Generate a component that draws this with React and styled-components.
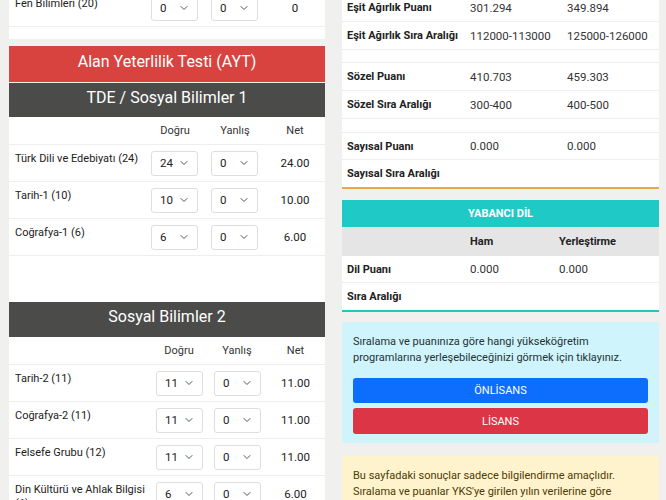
import React from "react";
import styled, { createGlobalStyle } from "styled-components";
import { ChevronDown } from "lucide-react";

const tyt = [{ name: "Fen Bilimleri (20)", d: "0", y: "0", net: "0" }];

const sosyal1 = [
  { name: "Türk Dili ve Edebiyatı (24)", d: "24", y: "0", net: "24.00" },
  { name: "Tarih-1 (10)", d: "10", y: "0", net: "10.00" },
  { name: "Coğrafya-1 (6)", d: "6", y: "0", net: "6.00" },
];

const sosyal2 = [
  { name: "Tarih-2 (11)", d: "11", y: "0", net: "11.00" },
  { name: "Coğrafya-2 (11)", d: "11", y: "0", net: "11.00" },
  { name: "Felsefe Grubu (12)", d: "11", y: "0", net: "11.00" },
  { name: "Din Kültürü ve Ahlak Bilgisi (6)", d: "6", y: "0", net: "6.00" },
];

const scores = [
  { label: "Eşit Ağırlık Puanı", a: "301.294", b: "349.894" },
  { label: "Eşit Ağırlık Sıra Aralığı", a: "112000-113000", b: "125000-126000" },
  { gap: 13 },
  { label: "Sözel Puanı", a: "410.703", b: "459.303" },
  { label: "Sözel Sıra Aralığı", a: "300-400", b: "400-500" },
  { gap: 14 },
  { label: "Sayısal Puanı", a: "0.000", b: "0.000", h: 27 },
  { label: "Sayısal Sıra Aralığı", a: "", b: "", h: 27, last: true },
];

const Select = ({ value }) => (
  <SelectBox>
    <span>{value}</span>
    <ChevronDown size={12} strokeWidth={2} color="#555" />
  </SelectBox>
);

const SubjectTable = ({ rows, cols, head = true }) => (
  <>
    {head && (
      <HeadRow $cols={cols}>
        <span />
        <HeadCell>Doğru</HeadCell>
        <HeadCell>Yanlış</HeadCell>
        <HeadCell>Net</HeadCell>
      </HeadRow>
    )}
    {rows.map((r) => (
      <SubjectRow key={r.name} $cols={cols}>
        <Label>{r.name}</Label>
        <Cell>
          <Select value={r.d} />
        </Cell>
        <Cell>
          <Select value={r.y} />
        </Cell>
        <Net>{r.net}</Net>
      </SubjectRow>
    ))}
  </>
);

const App = () => {
  return (
    <>
      <GlobalStyle />
      <Page>
        <LeftCol>
          <Card $pb={12}>
            <SubjectTable rows={tyt} cols="136px 60px 60px 60px" head={false} />
          </Card>
          <Banner>Alan Yeterlilik Testi (AYT)</Banner>
          <Card>
            <DarkHeader $h={34}>TDE / Sosyal Bilimler 1</DarkHeader>
            <SubjectTable rows={sosyal1} cols="136px 60px 60px 60px" />
            <Spacer />
            <DarkHeader $h={35}>Sosyal Bilimler 2</DarkHeader>
            <SubjectTable rows={sosyal2} cols="141px 58px 58px 59px" />
          </Card>
        </LeftCol>

        <RightCol>
          <ScoreCard $line="#e9a94b">
            {scores.map((s, i) =>
              s.gap ? (
                <GapRow key={i} $h={s.gap} />
              ) : (
                <ScoreRow key={i} $h={s.h} $cols="123px 97px 1fr" $last={s.last}>
                  <ScoreLabel>{s.label}</ScoreLabel>
                  <ScoreValue>{s.a}</ScoreValue>
                  <ScoreValue>{s.b}</ScoreValue>
                </ScoreRow>
              )
            )}
          </ScoreCard>

          <ScoreCard $line="#1fc7c3" $mt={11}>
            <TealHeader>YABANCI DİL</TealHeader>
            <ScoreRow $h={29} $cols="123px 89px 1fr" $grey>
              <span />
              <ScoreLabel>Ham</ScoreLabel>
              <ScoreLabel>Yerleştirme</ScoreLabel>
            </ScoreRow>
            <ScoreRow $h={27} $cols="123px 89px 1fr">
              <ScoreLabel>Dil Puanı</ScoreLabel>
              <ScoreValue>0.000</ScoreValue>
              <ScoreValue>0.000</ScoreValue>
            </ScoreRow>
            <ScoreRow $h={27} $cols="123px 89px 1fr" $last>
              <ScoreLabel>Sıra Aralığı</ScoreLabel>
              <span />
              <span />
            </ScoreRow>
          </ScoreCard>

          <InfoBox>
            <p>
              Sıralama ve puanınıza göre hangi yükseköğretim programlarına
              yerleşebileceğinizi görmek için tıklayınız.
            </p>
            <Button $bg="#0d6efd" $h={25}>ÖNLİSANS</Button>
            <Button $bg="#dc3545" $h={26}>LİSANS</Button>
          </InfoBox>

          <WarnBox>
            Bu sayfadaki sonuçlar sadece bilgilendirme amaçlıdır. Sıralama ve
            puanlar YKS'ye girilen yılın verilerine göre hesaplanmaktadır.
          </WarnBox>
        </RightCol>
      </Page>
    </>
  );
};

export default App;

const GlobalStyle = createGlobalStyle`
  body {
    margin: 0;
    background: #f0f0ef;
    font-family: Roboto, "Noto Sans", sans-serif;
    color: #222;
  }
`;

const Page = styled.div`
  display: grid;
  grid-template-columns: 316px 317px;
  column-gap: 17px;
  align-items: start;
  padding-left: 9px;
  height: 500px;
  overflow: hidden;
`;

const LeftCol = styled.div`
  display: flex;
  flex-direction: column;
  margin-top: -10px;
`;

const RightCol = styled.div`
  display: flex;
  flex-direction: column;
  margin-top: -6px;
`;

const Card = styled.div`
  background: #fff;
  padding-bottom: ${(p) => p.$pb || 0}px;
`;

const Banner = styled.div`
  margin: 7px 0 1px;
  height: 36px;
  box-sizing: border-box;
  padding-bottom: 6px;
  background: #d84340;
  color: #fff;
  font-size: 16px;
  display: flex;
  align-items: center;
  justify-content: center;
`;

const DarkHeader = styled.div`
  height: ${(p) => p.$h}px;
  box-sizing: border-box;
  padding-bottom: 6px;
  background: #4b4c4a;
  color: #fff;
  font-size: 16px;
  display: flex;
  align-items: center;
  justify-content: center;
`;

const Spacer = styled.div`
  height: 46px;
`;

const HeadRow = styled.div`
  display: grid;
  grid-template-columns: ${(p) => p.$cols};
  height: 28px;
  align-items: center;
  border-bottom: 1px solid #eeeeee;
  box-sizing: border-box;
`;

const HeadCell = styled.span`
  text-align: center;
  font-size: 11px;
  color: #333;
`;

const SubjectRow = styled.div`
  display: grid;
  grid-template-columns: ${(p) => p.$cols};
  height: 37px;
  align-items: center;
  border-bottom: 1px solid #eeeeee;
  box-sizing: border-box;
`;

const Label = styled.span`
  align-self: start;
  padding: 7px 0 0 6px;
  font-size: 11px;
  line-height: 14px;
  color: #222;
`;

const Cell = styled.div`
  padding-left: 6px;
`;

const Net = styled.span`
  text-align: center;
  font-size: 11.5px;
`;

const SelectBox = styled.div`
  width: 47px;
  height: 25px;
  box-sizing: border-box;
  border: 1px solid #dedede;
  border-radius: 3px;
  background: #fff;
  display: flex;
  align-items: center;
  justify-content: space-between;
  padding: 0 7px 0 8px;
  font-size: 11.5px;
`;

const ScoreCard = styled.div`
  background: #fff;
  margin-top: ${(p) => p.$mt || 0}px;
  border-bottom: 2px solid ${(p) => p.$line};
`;

const ScoreRow = styled.div`
  display: grid;
  grid-template-columns: ${(p) => p.$cols};
  height: ${(p) => p.$h || 28}px;
  box-sizing: border-box;
  align-items: center;
  padding-left: 5px;
  background: ${(p) => (p.$grey ? "#e5e5e6" : "#fff")};
  border-bottom: ${(p) => (p.$last || p.$grey ? "none" : "1px solid #eeeeee")};
`;

const GapRow = styled.div`
  height: ${(p) => p.$h}px;
  box-sizing: border-box;
  border-bottom: 1px solid #eeeeee;
`;

const ScoreLabel = styled.span`
  font-size: 11px;
  font-weight: 700;
  color: #222;
  white-space: nowrap;
`;

const ScoreValue = styled.span`
  font-size: 11.5px;
  color: #333;
  white-space: nowrap;
`;

const TealHeader = styled.div`
  height: 27px;
  background: #1fcac6;
  color: #fff;
  font-size: 11px;
  font-weight: 700;
  display: flex;
  align-items: center;
  justify-content: center;
`;

const InfoBox = styled.div`
  margin-top: 10px;
  background: #cff4fc;
  padding: 12px 11px 9px;
  display: flex;
  flex-direction: column;
  gap: 5px;

  p {
    margin: 0 0 7px;
    font-size: 11px;
    line-height: 16px;
    color: #1f3236;
  }
`;

const Button = styled.div`
  height: ${(p) => p.$h}px;
  background: ${(p) => p.$bg};
  border-radius: 3px;
  color: #fff;
  font-size: 11px;
  display: flex;
  align-items: center;
  justify-content: center;
`;

const WarnBox = styled.div`
  margin-top: 13px;
  background: #fff3cd;
  padding: 12px 11px;
  font-size: 11px;
  line-height: 16px;
  color: #4d3a04;
`;
